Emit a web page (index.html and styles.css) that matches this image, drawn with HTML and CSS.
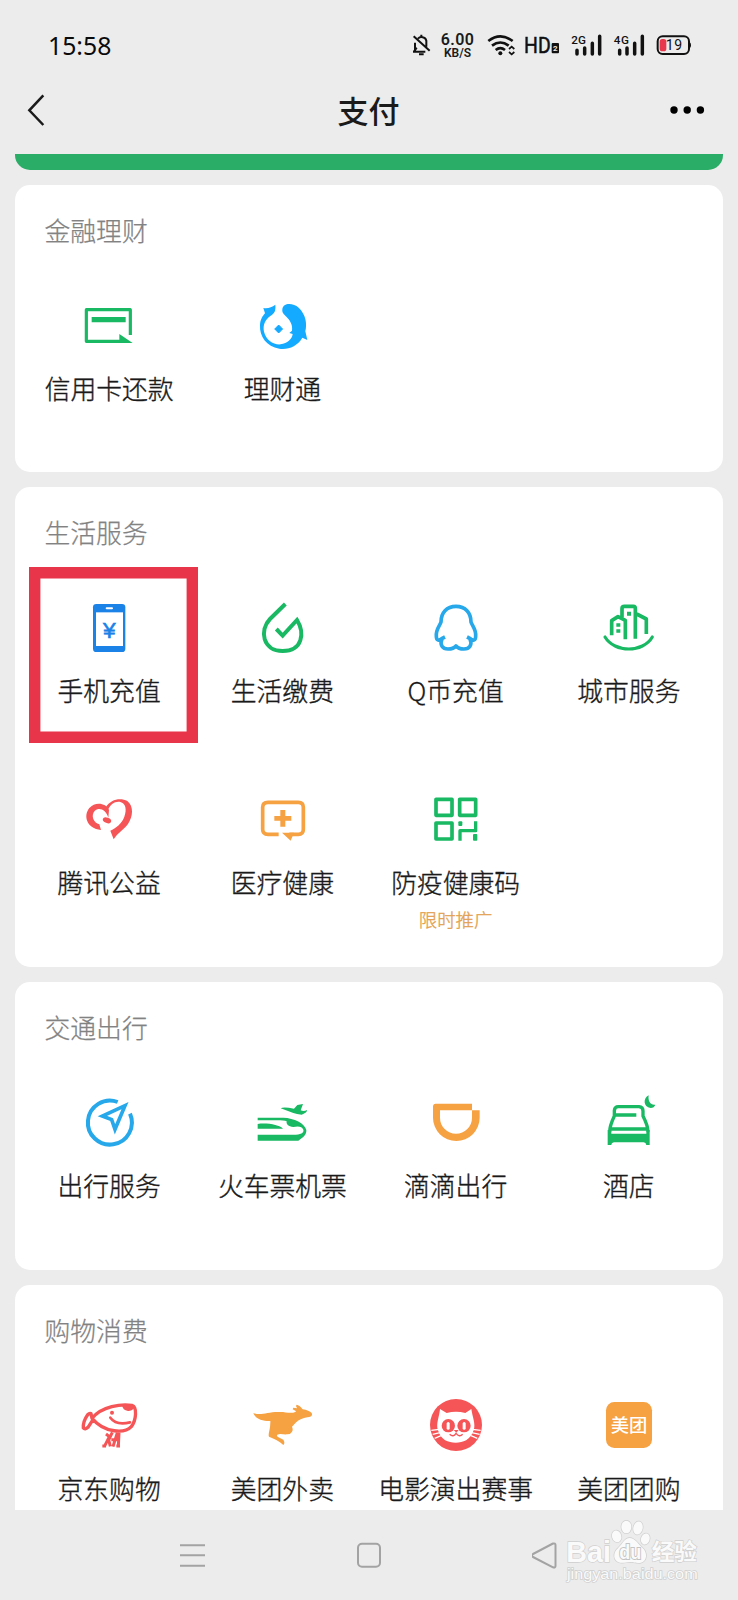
FILE: index.html
```html
<!DOCTYPE html>
<html lang="zh-CN">
<head>
<meta charset="utf-8">
<title>支付</title>
<link rel="stylesheet" href="styles.css">
</head>
<body>
<div class="screen">
  <div class="status">
    <span class="clock">15:58</span>
    <div class="indicators">
      <svg width="22" height="30" viewBox="123 90 66 90" fill="none" stroke="#111" stroke-width="6">
        <path d="M141 150V128M150 116C156 109 172 109 175 122V140M135 155H172M138 155L146 143M137 109L185 152"/><path d="M160 104V110M153 163H167"/>
      </svg>
      <div class="speed"><b>6.00</b><b class="unit">KB/S</b></div>
      <svg width="32" height="30" viewBox="351 90 96 90" fill="none" stroke="#111" stroke-width="8">
        <path d="M361 123Q397 95 434 123M372 137Q397 118 422 137M383 150Q397 139 411 150"/><circle cx="397" cy="160" r="6" fill="#111" stroke="none"/>
        <path d="M423 147L431 140L439 147M423 156L431 163L439 156" stroke-width="5"/>
      </svg>
      <svg width="36" height="30" viewBox="471 90 108 90">
        <text class="hd" x="468" y="159" textLength="80" lengthAdjust="spacingAndGlyphs">HD</text>
        <rect x="551" y="129" width="22" height="31" rx="3" fill="#111"/><text class="hd-sim" x="562" y="154">2</text>
      </svg>
      <svg width="35" height="30" viewBox="603 90 105 90">
        <text class="net" x="610" y="132" textLength="44">2G</text>
        <path class="bars" d="M627 151V162M650 144V162M673 130V162M695 109V162"/>
      </svg>
      <svg width="36" height="30" viewBox="732 90 108 90">
        <text class="net" x="737" y="132" textLength="46">4G</text>
        <path class="bars" d="M755 151V162M777 144V162M800 130V162M823 109V162"/>
      </svg>
      <svg width="36" height="30" viewBox="864 90 108 90">
        <rect x="869" y="109" width="94" height="53" rx="15" fill="none" stroke="#111" stroke-width="6"/>
        <path d="M964 127Q969 127 969 135Q969 144 964 144Z" fill="#111"/>
        <rect x="875" y="117" width="20" height="37" rx="8" fill="#e8384c"/>
        <text class="charge" x="893" y="149" textLength="49">19</text>
      </svg>
    </div>
  </div>

  <header class="topbar">
    <svg width="22" height="36" viewBox="72 276 66 108"><path d="M130 286L88 331L130 375" fill="none" stroke="#1a1a1a" stroke-width="7.5"/></svg>
    <h1>支付</h1>
    <svg width="36" height="12" viewBox="0 0 36 12"><circle cx="5" cy="6" r="3.7"/><circle cx="18.2" cy="6" r="3.7"/><circle cx="31.4" cy="6" r="3.7"/></svg>
  </header>

  <main class="content">
    <div class="wallet"></div>

    <section class="card card-finance">
      <h2>金融理财</h2>
      <div class="grid">
        <a class="item">
          <svg class="icon green" viewBox="219 270 216 216">
            <path class="line" stroke-width="9.5" stroke-linejoin="round" d="M391 405V329H259V424H364"/>
            <path d="M358 402L398 429H358ZM275 351H377V367H275Z"/>
          </svg><span>信用卡还款</span>
        </a>
        <a class="item">
          <svg class="icon blue" viewBox="738 270 216 216">
            <path d="M847 328C849 307 879 308 896 323C917 343 922 370 916 394L922 420L907 413C892 439 864 450 838 446C800 440 778 410 780 375C781 358 788 348 795 340L790 324C803 327 815 322 826 314C828 335 822 340 812 347C795 359 788 375 792 395C798 420 820 435 842 433C862 430 876 418 878 402L868 399L876 392C879 372 868 358 856 347C848 340 846 335 847 328Z"/>
            <path d="M836 375Q841 381 848 387Q841 393 836 399Q831 393 824 387Q831 381 836 375Z" stroke="currentColor" stroke-width="3"/>
          </svg><span>理财通</span>
        </a>
      </div>
    </section>

    <section class="card">
      <h2>生活服务</h2>
      <div class="grid">
        <a class="item marked">
          <svg class="icon phone" viewBox="219 276 216 216">
            <rect x="279" y="312" width="97" height="144" rx="10"/>
            <path fill="#fff" d="M288 337H369V438H288Z"/><rect x="317" y="322" width="22" height="6" rx="3" fill="#fff"/>
            <text class="yuan" x="328" y="415">¥</text>
          </svg><span>手机充值</span>
        </a>
        <a class="item">
          <svg class="icon green" viewBox="738 276 216 216">
            <path class="line" stroke-width="12" d="M856 312L810 357C777 391 788 453 848 453C909 453 914 398 891 360L848 407L829 387"/>
          </svg><span>生活缴费</span>
        </a>
        <a class="item">
          <svg class="icon sky" viewBox="156 276 216 216">
            <path class="line" stroke-width="11" stroke-linejoin="round" d="M231 411L221 416C213 422 205 423 205 409C203 388 216 376 219 366C219 338 236 319 264 319C292 319 309 338 309 366C312 376 325 388 323 409C323 423 315 422 307 416L297 411M222 417C214 435 224 447 240 447C253 447 260 443 264 438C268 443 275 447 288 447C304 447 314 435 306 417"/>
          </svg><span>Q币充值</span>
        </a>
        <a class="item">
          <svg class="icon green" viewBox="675 276 216 216">
            <path class="line" stroke-width="11" stroke-linejoin="round" d="M731 406V362L750 350L772 361V418M762 352V326Q762 319 769 319H796Q802 319 802 326V416M806 342L835 357V402"/>
            <path class="line" stroke-width="9.5" stroke-linecap="round" d="M711 411C740 459 825 459 853 411"/>
            <path d="M777 335H789V347H777ZM745 370H757V380H745ZM745 388H757V398H745Z"/>
          </svg><span>城市服务</span>
        </a>
        <a class="item">
          <svg class="icon red" viewBox="219 72 216 216">
            <path d="M327 150C318 128 285 124 268 144C249 168 260 205 303 210L298 193C280 188 272 167 284 153C298 140 318 150 325 173Z"/>
            <path d="M317 142C332 117 362 112 382 123C402 139 399 170 384 192C372 208 354 218 341 238L331 212C347 205 366 190 373 170C381 149 377 129 361 126C345 123 330 134 324 150Z"/>
            <ellipse cx="321" cy="181" rx="13" ry="8" transform="rotate(20 321 181)"/>
          </svg><span>腾讯公益</span>
        </a>
        <a class="item">
          <svg class="icon orange" viewBox="738 72 216 216">
            <path class="line" stroke-width="11" d="M836 223H804Q788 223 788 208V142Q788 127 804 127H895Q910 127 910 142V208Q910 223 895 223H868"/>
            <path d="M846 218H882L872 242ZM823 168H841V150H856V168H874V182H856V200H841V182H823Z"/>
          </svg><span>医疗健康</span>
        </a>
        <a class="item">
          <svg class="icon green" viewBox="156 72 216 216">
            <path class="line" stroke-width="11" stroke-linejoin="round" d="M204 118H252V166H204ZM275 118H323V166H275ZM204 189H252V237H204Z"/>
            <path class="line" stroke-width="10" stroke-linejoin="round" d="M276 242V212H323V184"/>
            <rect x="271" y="184" width="12" height="14" rx="3"/><rect x="315" y="222" width="13" height="20" rx="3"/>
          </svg><span>防疫健康码</span><small>限时推广</small>
        </a>
      </div>
    </section>

    <section class="card">
      <h2>交通出行</h2>
      <div class="grid">
        <a class="item">
          <svg class="icon sky" viewBox="220 111 216 216">
            <path class="line" stroke-width="12" d="M391 191A66 66 0 1 1 354 156"/>
            <path class="line" stroke-width="11" d="M376 167L308 198L336 209L346 238Z"/>
          </svg><span>出行服务</span>
        </a>
        <a class="item">
          <svg class="icon green" viewBox="738 111 216 216">
            <path d="M842 175Q850 170 882 176L892 165L909 162L902 181Q912 185 921 180Q922 188 905 194Q890 193 880 189Z"/>
            <path d="M773 203H850C882 204 915 220 919 240C920 255 909 262 895 272H773V254H880C902 254 913 248 910 239C906 229 895 228 880 231C865 230 858 222 860 214C850 209 830 211 773 211ZM773 222C800 218 840 225 849 236H773Z"/>
          </svg><span>火车票机票</span>
        </a>
        <a class="item">
          <svg class="icon orange" viewBox="156 111 216 216">
            <path d="M312 161H203Q195 161 195 170V203A70 70 0 0 0 335 203V181H312V203A48 48 0 0 1 216 203V181H312Z"/>
          </svg><span>滴滴出行</span>
        </a>
        <a class="item">
          <svg class="icon green" viewBox="676 111 216 216">
            <path class="line" stroke-width="10" stroke-linejoin="round" d="M726 245Q726 228 740 198V182Q741 170 752 170H814Q826 171 826 183V198Q841 228 841 245M741 195H806M730 237H838"/>
            <path d="M720 285V240L731 242V251H836V242L846 240V285H836Q835 277 828 277H740Q732 277 731 285Z"/>
            <path d="M843 136C826 144 826 171 849 174C856 174 861 170 863 164C850 167 840 154 843 136Z"/>
          </svg><span>酒店</span>
        </a>
      </div>
    </section>

    <section class="card">
      <h2>购物消费</h2>
      <div class="grid">
        <a class="item">
          <svg class="icon red" viewBox="219 60 216 216">
            <path class="line" stroke-width="10" stroke-linejoin="round" d="M276 145C305 108 365 101 396 106C412 111 409 150 394 170C375 190 315 191 276 145ZM276 145L273 131Q268 129 263 134C253 148 249 162 250 174Q255 180 264 172L279 149"/>
            <path d="M366 106H403Q402 124 384 123Q368 121 366 106Z"/><circle cx="336" cy="128" r="6"/>
            <path class="line" stroke-width="8" stroke-linecap="round" d="M331 143C345 162 370 162 390 157"/>
            <path class="line" stroke-width="9" d="M318 192L328 200L313 230M337 187L326 210L331 229M352 188L339 230M357 188L355 230M334 209H356M307 228H318M349 228H360"/>
          </svg><span>京东购物</span>
        </a>
        <a class="item">
          <svg class="icon orange" viewBox="738 60 216 216">
            <path d="M760 129C785 138 800 125 840 126C860 126 872 132 888 125L886 122L878 118L880 113L891 115L888 108L890 104C898 106 904 112 908 118C920 120 930 124 935 129C939 137 932 141 922 142C908 144 895 150 887 158L876 170Q880 180 876 185Q872 193 862 193C850 194 840 190 832 194Q829 198 834 201L850 209C854 215 854 222 850 225C838 212 820 205 807 200C803 192 812 178 811 153C795 154 767 150 760 129Z"/>
          </svg><span>美团外卖</span>
        </a>
        <a class="item">
          <svg class="icon red" viewBox="156 60 216 216">
            <circle cx="264" cy="165" r="78"/>
            <path fill="#fff" d="M216 117L236 129Q264 122 292 129L310 117C313 140 324 162 317 181C306 211 286 218 263 218C240 218 220 211 210 181C203 162 214 140 216 117Z"/>
            <circle cx="241" cy="167" r="20"/><circle cx="288" cy="167" r="20"/>
            <rect x="236" y="156" width="9" height="23" rx="4.5" fill="#fff"/><rect x="284" y="156" width="9" height="23" rx="4.5" fill="#fff"/>
            <path d="M257 180H272L265 188Z"/><path class="line" stroke-width="4" d="M245 193Q256 203 264 190Q274 203 284 193"/>
            <path d="M190 181L214 178M194 193L216 188M200 205L219 197M338 181L313 178M335 193L311 188M328 205L309 197" stroke="#fff" stroke-width="4"/>
          </svg><span>电影演出赛事</span>
        </a>
        <a class="item">
          <svg class="icon orange" viewBox="675 60 216 216">
            <rect x="714" y="96" width="138" height="138" rx="25"/><text class="brand" x="783" y="186">美团</text>
          </svg><span>美团团购</span>
        </a>
      </div>
    </section>
  </main>

  <footer class="navbar">
    <svg width="26" height="28" viewBox="0 0 26 28"><path d="M0 4.3H25M0 14.3H25M0 24.7H25"/></svg>
    <svg width="26" height="28" viewBox="0 0 26 28"><rect x="2" y="2.8" width="22" height="23" rx="4"/></svg>
    <svg width="26" height="28" viewBox="0 0 26 28"><path stroke-linejoin="round" d="M1 13Q-1 14.5 1 16L21 26.3Q23.5 27 23.5 25V4Q23.5 2 21 2.5Z"/></svg>
    <svg class="watermark" width="140" height="72" viewBox="590 440 420 216">
      <text class="wm-latin" x="594" y="575" textLength="134" lengthAdjust="spacingAndGlyphs">Bai</text>
      <g class="paw">
        <ellipse cx="745" cy="498" rx="14" ry="18" transform="rotate(-15 745 498)"/><ellipse cx="774" cy="470" rx="15" ry="19"/>
        <ellipse cx="809" cy="473" rx="14" ry="20" transform="rotate(12 809 473)"/><ellipse cx="831" cy="506" rx="13" ry="17" transform="rotate(18 831 506)"/>
        <path d="M784 503C800 503 808 520 822 532C838 545 838 574 815 578C798 578 795 575 785 575C775 575 768 579 755 577C733 572 733 546 750 532C764 520 768 503 784 503Z"/>
      </g>
      <text class="wm-du" x="786" y="566" textLength="66" lengthAdjust="spacingAndGlyphs">du</text>
      <text class="wm-cjk" x="850" y="568">经验</text>
      <text class="wm-url" x="596" y="626" textLength="392" lengthAdjust="spacingAndGlyphs">jingyan.baidu.com</text>
    </svg>
  </footer>
</div>
</body>
</html>
```

FILE: styles.css
```css
* { box-sizing: border-box; }
body {
  margin: 0;
  background: #ececec;
  color: #1a1a1a;
  font-family: "Noto Sans CJK SC", "Noto Sans", sans-serif;
}
.screen {
  display: flex;
  flex-direction: column;
  width: 738px;
  height: 1600px;
  overflow: hidden;
}
svg { display: block; flex: none; }

/* Status bar */
.status {
  display: flex;
  flex: none;
  align-items: center;
  justify-content: space-between;
  height: 90px;
  padding: 0 46px 0 48px;
}
.clock { font: 400 24.8px/30px "Noto Sans", sans-serif; color: #0a0a0a; }
.indicators { display: flex; align-items: center; gap: 8px; }
.speed {
  display: flex;
  flex-direction: column;
  align-items: center;
  width: 38px;
  padding-right: 1px;
  padding-top: 2px;
  font: 700 16px/14px Roboto, sans-serif;
  letter-spacing: .4px;
}
.speed b { font-weight: 600; }
.speed .unit { font-size: 12px; line-height: 12px; letter-spacing: 0; }
.hd { font: 400 65px Roboto, sans-serif; fill: #111; stroke: #111; stroke-width: 1.5; }
.hd-sim { font: 700 24px Roboto, sans-serif; fill: #ececec; text-anchor: middle; }
.net { font: 500 35px Roboto, sans-serif; fill: #111; }
.bars { stroke: #111; stroke-width: 10.5; stroke-linecap: round; }
.charge { font: 400 42px Roboto, sans-serif; fill: #111; }

/* Title bar */
.topbar {
  display: flex;
  flex: none;
  align-items: center;
  justify-content: space-between;
  height: 64px;
  padding: 0 33px 24px 24px;
}
.topbar h1 {
  margin: 0 0 0 22px;
  font-size: 31px;
  line-height: 40px;
  font-weight: 500;
}

/* Service cards */
.content {
  display: flex;
  flex: 1;
  flex-direction: column;
  gap: 15px;
  min-height: 0;
  padding: 0 15px;
  overflow: hidden;
}
.wallet {
  flex: none;
  height: 16px;
  background: #2aad67;
  border-radius: 0 0 15px 15px;
}
.card {
  flex: none;
  padding: 25px 0 31px;
  background: #fff;
  border-radius: 15px;
}
.card-finance { padding-bottom: 30px; }
.card h2 {
  margin: 0 0 0 29.5px;
  color: #828282;
  font-size: 25.8px;
  line-height: 39px;
  padding-bottom: 1px;
  font-weight: 300;
  -webkit-text-stroke: .25px;
}
.grid {
  display: grid;
  grid-template-columns: repeat(4, 173.25px);
  grid-auto-rows: 192px;
  padding-left: 7.5px;
}
.item {
  position: relative;
  display: flex;
  flex-direction: column;
  align-items: center;
  padding-top: 40px;
  font-size: 25.8px;
  font-weight: 300;
  line-height: 36px;
  white-space: nowrap;
  -webkit-text-stroke: .35px;
}
.item span { margin-top: 8px; }
.item small { margin-top: 7px; color: #e3a04f; font-size: 18.4px; line-height: 24px; }
.marked::after {
  content: "";
  position: absolute;
  top: 15px;
  left: 6.5px;
  width: 168.7px;
  height: 175.7px;
  box-shadow: inset 0 0 0 11.4px #e93549;
}
.icon { width: 72px; height: 72px; fill: currentColor; }
.line { fill: none; stroke: currentColor; }
.green { color: #19b863; }
.blue { color: #14aaff; }
.sky { color: #27a8ea; }
.phone { color: #1b82e8; }
.red { color: #f55557; }
.orange { color: #f6a142; }
.yuan { font: 500 68px "Liberation Sans", sans-serif; text-anchor: middle; stroke: currentColor; stroke-width: 2; }
.brand { font: 500 55px "Noto Sans CJK SC", sans-serif; fill: #fff; text-anchor: middle; }

/* System navigation */
.navbar {
  position: relative;
  display: flex;
  flex: none;
  align-items: center;
  justify-content: center;
  gap: 150px;
  height: 90px;
}
.navbar > svg:not(.watermark) { fill: none; stroke: #a3a3a3; stroke-width: 2; }
.watermark { position: absolute; top: 6.7px; left: 564.7px; fill: #fafafa; stroke: #cfcfcf; stroke-width: 4; paint-order: stroke; }
.wm-latin { font: 700 90px "Liberation Sans", sans-serif; }
.wm-du { font: 700 60px "Liberation Sans", sans-serif; text-anchor: middle; stroke-width: 6; stroke: #c4c4c4; }
.wm-cjk { font: 700 68px "Noto Sans CJK SC", sans-serif; }
.wm-url { font: 400 42px "Liberation Sans", sans-serif; stroke-width: 4; }
```
